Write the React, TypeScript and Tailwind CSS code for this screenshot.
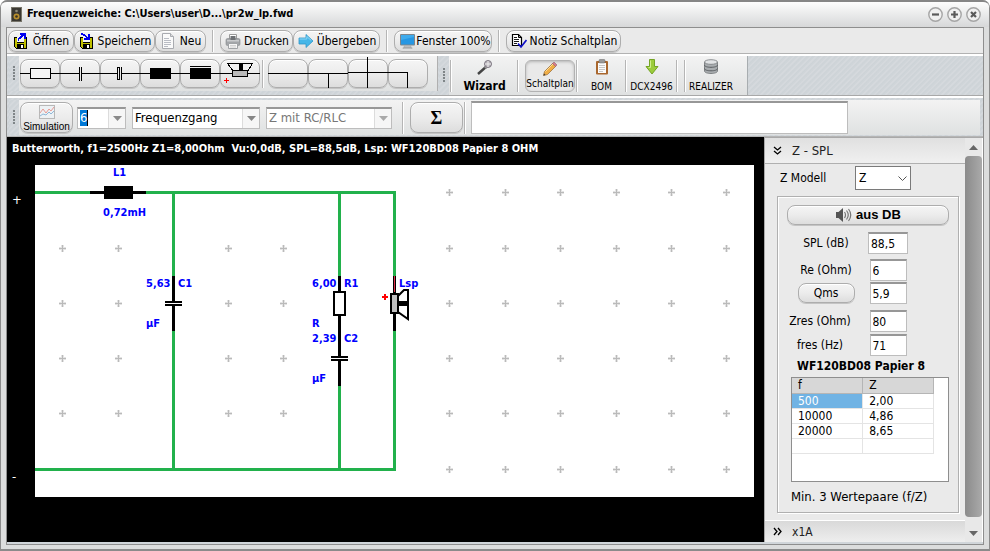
import type { ReactNode } from "react";

const tahoma = "font-['DejaVu_Sans_Condensed','DejaVu_Sans',sans-serif]";

const raised =
  "rounded-lg border border-[#adadad] bg-linear-to-b from-[#f5f5f5] via-[#ececec] to-[#dddddd] shadow-[inset_0_1px_0_#ffffff,0_1px_0_#c4c4c4]";
const texture =
  "bg-[#d0d5d9] bg-[repeating-linear-gradient(135deg,#d5d9dd_0px,#d5d9dd_1px,#cdd3d7_2px,#d1d6da_4px)]";
const band = "bg-linear-to-b from-[#f3f3f3] to-[#dfe1e1]";

function Sep({ className = "h-6" }: { className?: string }) {
  return <span className={`w-[2px] shrink-0 border-l border-[#b5b5b5] bg-white ${className}`} />;
}

function Grip() {
  return (
    <span className={`flex w-[10px] shrink-0 items-center justify-center self-stretch ${texture}`}>
      <svg width="3" height="16" viewBox="0 0 3 16" shapeRendering="crispEdges">
        {[0, 3, 6, 9, 12].map((y) => (
          <rect key={y} x="0" y={y} width="2" height="2" fill="#7f8588" />
        ))}
      </svg>
    </span>
  );
}

function ToolButton({ icon, label, className }: { icon: ReactNode; label: string; className: string }) {
  return (
    <button className={`flex h-[22px] items-center whitespace-nowrap pl-1 text-[12px] leading-5 ${raised} ${className}`}>
      {icon}
      <span className="flex-1 text-center">{label}</span>
    </button>
  );
}

function Floppy({ save }: { save?: boolean }) {
  return (
    <svg className="shrink-0" width="16" height="16" viewBox="0 0 16 16" shapeRendering="crispEdges">
      <path d="M1 4h13v12H3l-2-2z" fill="#000" />
      <path d="M2 5h2v10H3v-1H2zM11 5h2v10h-2z" fill="#c0c000" />
      <path d="M4 4h7v5H4z" fill="#f4f4f4" />
      <path d="M4 10h7v1H4z" fill="#c0c000" />
      <path d="M5 12h6v3H5z" fill="#000" />
      <path d="M8 12h2v3H8z" fill="#fff" />
      {save ? (
        <path d="M2 0h2v1h2v1h1v1h1v1h1V1h2v6H5V5h2V4H6V3H4V2H2z" fill="#0000f0" />
      ) : (
        <path d="M7 0h6v6h-2V3h-1v1H9v1H8v1H6v2H5V5h1V4h1V3h1V2H7z" fill="#0000f0" />
      )}
    </svg>
  );
}

const PageIcon = (
  <svg className="shrink-0" width="16" height="16" viewBox="0 0 16 16">
    <path d="M2.500.500h8l3 3v12h-11z" fill="#fafafa" stroke="#a9abb0" />
    <path d="M10.500.500v3h3" fill="#ddd" stroke="#a9abb0" />
    <path d="M4 5.500h5M4 7.500h7M4 9.500h7M4 11.500h7M4 13.500h4" stroke="#b9bcc4" />
  </svg>
);

const PrinterIcon = (
  <svg className="shrink-0" width="16" height="16" viewBox="0 0 16 16">
    <path d="M4.500 7V1.500h7V7" fill="#fff" stroke="#9a9a9a" />
    <rect x="1" y="5.500" width="14" height="7" rx="1.500" fill="#a3a6a9" stroke="#85888b" strokeWidth=".6" />
    <path d="M5.500 3h5v4h-5z" fill="#6f7275" />
    <path d="M2 7h12v1.500H2z" fill="#c9cbcd" />
    <path d="M3.500 10.500h9v5h-9z" fill="#f6f6f6" stroke="#a0a3a6" />
    <path d="M5 12.500h6M5 14h6" stroke="#c4c4c4" strokeWidth=".7" />
  </svg>
);

const ArrowRightIcon = (
  <svg className="shrink-0" width="16" height="16" viewBox="0 0 16 16">
    <path d="M1 5h7V1.500l7 6.500-7 6.500V11H1z" fill="#45b6e8" stroke="#2f96c8" strokeWidth=".8" />
    <path d="M1.500 6h7.300V3.500l4.500 4" fill="none" stroke="#8bd6f5" />
  </svg>
);

const MonitorIcon = (
  <svg className="shrink-0" width="17" height="16" viewBox="0 0 17 16">
    <path d="M5 13h7v1.500H5zM4 14.500h9V16H4z" fill="#c3c7ca" stroke="#999" strokeWidth=".4" />
    <rect x="1" y="1" width="15" height="11.500" rx="1" fill="#7d858b" />
    <rect x="2" y="2" width="13" height="9.500" fill="#2697e3" />
    <path d="M2 2h13v2L2 7z" fill="#3fabec" />
  </svg>
);

const NoteIcon = (
  <svg className="shrink-0" width="16" height="16" viewBox="0 0 16 16">
    <path d="M1.500 1.500h6l3 3v8h-9z" fill="#fff" stroke="#000" strokeWidth="1.2" />
    <path d="M7.500 1.500v3h3" fill="none" stroke="#000" />
    <path d="M3 4.500h3M3 6.500h5M3 8.500h5M3 10.500h3" stroke="#000" strokeWidth=".9" />
    <path d="M7 10.500l3 3.500 5.500-7" fill="none" stroke="#1010c8" strokeWidth="1.700" />
  </svg>
);

function Title() {
  return (
    <header className={`flex h-[27px] shrink-0 items-center rounded-t-md border-t-2 border-[#868686] bg-linear-to-b from-[#fdfdfd] to-[#d7d8d9] pl-[10px] pr-2 ${tahoma}`}>
      <svg width="12" height="15" viewBox="0 0 12 15">
        <rect x=".5" y=".5" width="10" height="14" fill="#3a3832" stroke="#77746a" />
        <circle cx="5.500" cy="4" r="1.300" fill="#8f8b7a" />
        <circle cx="5.500" cy="9.500" r="3" fill="#b98f2c" />
        <circle cx="5.500" cy="9.500" r="1.300" fill="#3a3220" />
      </svg>
      <h1 className="ml-1 flex-1 text-[11px] font-bold">Frequenzweiche: C:\Users\user\D...\pr2w_lp.fwd</h1>
      <div className="flex gap-1">
        {[
          ["Minimieren", "M4 7.500h7"],
          ["Maximieren", "M7.500 4v7M4 7.500h7"],
          ["Schließen", "M5 5l5 5M10 5l-5 5"],
        ].map(([name, d]) => (
          <button key={name} aria-label={name}>
            <svg width="15" height="15" viewBox="0 0 15 15">
              <circle cx="7.500" cy="7.500" r="6.700" fill="#f0f0f0" stroke="#a5a5a5" strokeWidth="1.400" />
              <path d={d} stroke="#5a5a5a" strokeWidth="2.200" />
            </svg>
          </button>
        ))}
      </div>
    </header>
  );
}

function MenuBar() {
  return (
    <nav className={`flex h-[26px] shrink-0 items-center border-b border-[#b2b2b2] bg-[#eaeaea] pl-px ${tahoma}`}>
      <ToolButton className="w-[66px]" icon={<Floppy />} label="Öffnen" />
      <ToolButton className="w-[81px]" icon={<Floppy save />} label="Speichern" />
      <ToolButton className="w-[51px]" icon={PageIcon} label="Neu" />
      <Sep className="mx-[6px] h-[22px]" />
      <ToolButton className="w-[73px]" icon={PrinterIcon} label="Drucken" />
      <ToolButton className="w-[87px]" icon={ArrowRightIcon} label="Übergeben" />
      <Sep className="mx-[6px] h-[22px]" />
      <ToolButton className="w-[98px]" icon={MonitorIcon} label="Fenster 100%" />
      <Sep className="mx-[6px] h-[22px]" />
      <ToolButton className="w-[115px]" icon={NoteIcon} label="Notiz Schaltplan" />
    </nav>
  );
}

const parts: [string, ReactNode][] = [
  ["Widerstand", <><path d="M0 14.500h10M31 14.500h9" /><rect x="10.500" y="9.500" width="20" height="10" fill="#f4f4f4" /></>],
  ["Kondensator", <path d="M0 14.500h19M21 14.500h19M19.500 8v14M21.500 8v14" />],
  ["Elko", <><path d="M0 14.500h17M22 14.500h18" /><path d="M17.500 8.500h2v12h-2zM21.500 8v13" /></>],
  ["Spule", <><path d="M0 14.500h40" /><rect x="10" y="9" width="21" height="11" fill="#000" stroke="none" /></>],
  ["Kernspule", <><path d="M0 14.500h40M10 7.500h21" /><rect x="10" y="9" width="21" height="11" fill="#000" stroke="none" /></>],
  ["Lautsprecher", <><path d="M0 14.500h40" /><path d="M7.500 4.500h25l-5 8h-14z" fill="#f2f2f2" /><path d="M19 5h3v7h-3z" fill="#000" /><rect x="12.500" y="11.500" width="15" height="6" fill="#bbb" /><path d="M4 21.500h5M6.500 19v5" stroke="#ff0000" /></>],
];

const wires: [string, string][] = [
  ["Leitung", "M0 14.500h40"],
  ["Abzweig", "M0 14.500h40M20.500 14v15"],
  ["Kreuzung", "M0 13.500h40M19.500-2v31"],
  ["Ecke", "M0 13.500h19.500v15"],
];

function PartButton({ name, children }: { name: string; children: ReactNode }) {
  return (
    <button aria-label={name} title={name} className={`h-[29px] w-10 shrink-0 ${raised}`}>
      <svg className="-ml-px -mt-px overflow-visible" width="40" height="29" viewBox="0 0 40 29" fill="none" stroke="#000" shapeRendering="crispEdges">
        {children}
      </svg>
    </button>
  );
}

function IconTool({ label, className, text = "text-[10px]", children }: { label: string; className: string; text?: string; children: ReactNode }) {
  return (
    <button className={`flex shrink-0 flex-col items-center justify-between whitespace-nowrap ${className}`}>
      {children}
      <span className={`leading-[13px] ${text}`}>{label}</span>
    </button>
  );
}

function PartsBar() {
  return (
    <div className={`flex h-[42px] shrink-0 border-b border-t-2 border-b-[#a8a8a8] border-t-white pl-[2px] ${texture}`}>
      <div className={`mb-1 flex items-center border-r border-[#b0b0b0] pr-[9px] ${band}`}>
        <Grip />
        <span className="w-px" />
        {parts.map(([name, art]) => (
          <PartButton key={name} name={name}>{art}</PartButton>
        ))}
        <Sep className="ml-[2px] mr-1 h-[28px]" />
        {wires.map(([name, d]) => (
          <PartButton key={name} name={name}><path d={d} /></PartButton>
        ))}
      </div>
      <div className={`ml-px flex items-center border-r border-[#a8adb0] pr-[11px] ${band} ${tahoma}`}>
        <Grip />
        <Sep className="ml-px h-8" />
        <IconTool label="Wizard" className="h-[34px] w-[65px]" text="text-[12px] font-bold">
          <svg width="18" height="17" viewBox="0 0 18 17">
            <path d="M2 15L11 7" stroke="#444" strokeWidth="2.500" />
            <path d="M9 9l3-3" stroke="#999" strokeWidth="3" />
            <circle cx="12" cy="5" r="3.500" fill="#b7b2b9" stroke="#807a84" />
            <path d="M12 2v6M9 5h6" stroke="#eee" />
          </svg>
        </IconTool>
        <Sep className="mr-[6px] h-8" />
        <IconTool label="Schaltplan" className="h-8 w-[50px] rounded-md border border-[#b2b2b2] bg-[#e9e9e9] pb-px shadow-[inset_0_1px_3px_#b5b5b5]">
          <svg width="16" height="16" viewBox="0 0 16 16">
            <path d="M1.500 14.500l1-4L11 2l3 3-8.500 8.500z" fill="#f0ad45" stroke="#9f7440" strokeWidth=".8" />
            <path d="M3.500 10.500L11.500 2.500" stroke="#ffe09a" />
            <path d="M10.500 2.500L12 1l3 3-1.500 1.500z" fill="#d87a8a" stroke="#8c6670" strokeWidth=".6" />
            <path d="M1.500 14.500l.5-2 1.500 1.500z" fill="#333" />
          </svg>
        </IconTool>
        <Sep className="ml-px h-8" />
        <IconTool label="BOM" className="h-[34px] w-[47px]">
          <svg width="14" height="16" viewBox="0 0 14 16">
            <rect x="1" y="2" width="12" height="13.500" rx="1" fill="#a9672e" />
            <path d="M3 4h8v10H3z" fill="#fbfbfb" />
            <path d="M4 6.500h6M4 8.500h6M4 10.500h6M4 12.500h4" stroke="#c6c6c6" />
            <rect x="4" y=".5" width="6" height="3.500" rx="1" fill="#999" stroke="#666" strokeWidth=".5" />
          </svg>
        </IconTool>
        <Sep className="h-8" />
        <IconTool label="DCX2496" className="h-[34px] w-[49px]">
          <svg width="14" height="16" viewBox="0 0 14 16">
            <path d="M4.500.500h5v7H13L7 15 1 7.500h3.500z" fill="#9ccc3c" stroke="#74a424" />
            <path d="M5.500 1.500v7H3.500" fill="none" stroke="#d0ee8c" />
          </svg>
        </IconTool>
        <Sep className="mr-[6px] h-8" />
        <Sep className="h-8" />
        <IconTool label="REALIZER" className="h-[34px] w-[50px]">
          <svg width="16" height="15" viewBox="0 0 16 15">
            <path d="M1.500 3v9c0 1.500 3 2.500 6.500 2.500s6.500-1 6.500-2.500V3" fill="#a9adb0" stroke="#6d7174" strokeWidth=".8" />
            <path d="M1.500 6c0 1.500 3 2.300 6.500 2.300s6.500-.8 6.500-2.300M1.500 9.500c0 1.500 3 2.300 6.500 2.300s6.500-.8 6.500-2.300" fill="none" stroke="#595d60" />
            <ellipse cx="8" cy="3" rx="6.500" ry="2.300" fill="#e2e4e6" stroke="#777b7e" strokeWidth=".8" />
          </svg>
        </IconTool>
      </div>
    </div>
  );
}

const sunken = "border border-[#bdbdbd] border-t-2 border-t-[#979797] bg-white";

function Triangle({ up, color = "#8a8a8a" }: { up?: boolean; color?: string }) {
  return (
    <svg width="9" height="5" viewBox="0 0 9 5">
      <path d={up ? "M0 5l4.500-5L9 5z" : "M0 0l4.500 5L9 0z"} fill={color} />
    </svg>
  );
}

function Combo({ label, value, disabled, className }: { label: string; value: string; disabled?: boolean; className: string }) {
  return (
    <div className={`relative h-[22px] shrink-0 ${sunken} ${className} ${disabled ? "text-[#777]" : "text-black"}`}>
      <select aria-label={label} disabled={disabled} defaultValue={value} className="block h-full w-full appearance-none bg-transparent pl-[2px] text-[13px] leading-[18px] opacity-100 outline-none">
        <option>{value}</option>
      </select>
      <span className="pointer-events-none absolute inset-y-0 right-0 flex w-[17px] items-center justify-center border-l border-[#dcdcdc] bg-[#f6f6f6]">
        <Triangle color={disabled ? "#aaa" : "#858585"} />
      </span>
    </div>
  );
}

function SimulationBar() {
  return (
    <div className={`flex h-[41px] shrink-0 border-b border-t-2 border-b-[#b5b5b5] border-t-white pb-px pl-[2px] pr-[3px] pt-[2px] ${texture}`}>
      <div className={`flex flex-1 items-center ${band}`}>
        <Grip />
        <button className={`ml-px flex h-[31px] w-[53px] shrink-0 flex-col items-center justify-between pt-[2px] ${raised}`}>
          <svg width="16" height="14" viewBox="0 0 16 14">
            <rect x=".5" y=".5" width="15" height="13" fill="#edf1f4" stroke="#b8b8b8" />
            <path d="M1 8l3-4 3 4 3-4 2 2 3-4" fill="none" stroke="#e79a94" />
            <path d="M1 11l3-2 3 1 3-3 2 2 3-3" fill="none" stroke="#8fb8d8" />
          </svg>
          <span className="font-['Liberation_Sans',sans-serif] text-[10px] leading-[11px]">Simulation</span>
        </button>
        <div className={`ml-1 flex items-center gap-[6px] ${tahoma}`}>
          <div className={`flex h-[22px] w-[49px] items-center ${sunken}`}>
            <input aria-label="Wert" defaultValue="6" className="sr-only" />
            <span aria-hidden="true" className="ml-[2px] border-r border-black bg-[#0078d7] text-[13px] leading-4 text-white">6</span>
            <span className="ml-auto flex h-full w-[17px] items-center justify-center border-l border-[#dcdcdc] bg-[#f6f6f6]">
              <Triangle />
            </span>
          </div>
          <Combo label="Darstellung" value="Frequenzgang" className="w-[128px]" />
          <Combo label="Impedanz" value="Z mit RC/RLC" disabled className="w-[126px]" />
        </div>
        <Sep className="ml-[10px] mr-[6px] h-8" />
        <button aria-label="Summe" className={`h-[31px] w-[53px] shrink-0 font-['Liberation_Serif',serif] text-[18px] font-bold leading-[28px] ${raised}`}>Σ</button>
        <Sep className="ml-px mr-[5px] h-8" />
        <input aria-label="Anzeige" className={`h-[33px] min-w-0 flex-1 ${sunken}`} />
        <span className="w-[132px] shrink-0" />
      </div>
    </div>
  );
}

const gridX = [27, 83, 193, 248, 304, 359, 414, 470, 525, 581, 636, 691];
const gridY = [27, 83, 138, 193, 248, 304];
const covered = (x: number, y: number) =>
  ((y === 27 || y === 304) && x < 400) || x === 304 || x === 359;

function Schematic() {
  return (
    <svg className="block" width="719" height="332" viewBox="0 0 719 332" role="img" aria-label="Schaltplan" shapeRendering="crispEdges">
      <g stroke="#bababa" strokeWidth="1">
        {gridX.flatMap((x) =>
          gridY.filter((y) => !covered(x, y)).map((y) => (
            <g key={`${x}-${y}`}>
              <path d={`M${x - 3} ${y + 0.5}h7M${x + 0.5} ${y - 3}v7`} stroke="#e4e4e4" strokeWidth="3" />
              <path d={`M${x - 3} ${y + 0.5}h7M${x + 0.5} ${y - 3}v7`} />
            </g>
          )),
        )}
      </g>
      <path d="M0 27.500H359.500V304.500H0M138.500 27V304M304.500 27V304" fill="none" stroke="#22b14c" strokeWidth="3" />
      <g fill="#000">
        <rect x="55" y="26" width="56" height="3" />
        <rect x="69" y="21" width="29" height="13" />
        <rect x="137" y="111" width="3" height="55" />
        <rect x="303" y="111" width="3" height="110" />
        <rect x="358" y="111" width="3" height="55" />
        <rect x="130" y="136" width="17" height="5" />
        <rect x="296" y="191" width="17" height="5" />
      </g>
      <path d="M130 138.500h17M296 193.500h17" stroke="#fff" />
      <rect x="299" y="127" width="11" height="23" fill="#fff" stroke="#000" strokeWidth="2" />
      <path d="M359.500 111v16" stroke="#e0304a" />
      <g shapeRendering="auto">
        <path d="M363 131l6-6h4v29l-10-7z" fill="#fff" stroke="#000" strokeWidth="2" />
      </g>
      <rect x="363" y="136" width="10" height="5" />
      <rect x="356" y="129" width="7" height="19" fill="#c0c0c0" stroke="#000" strokeWidth="2" />
      <path d="M347 132h6M350 129v6" stroke="red" strokeWidth="2" />
      <g className={`text-[11px] font-bold ${tahoma}`} fill="#0000ff">
        <text x="78" y="11">L1</text>
        <text x="68" y="51">0,72mH</text>
        <text x="111" y="122">5,63</text>
        <text x="143" y="122">C1</text>
        <text x="111" y="162">µF</text>
        <text x="277" y="122">6,00</text>
        <text x="309" y="122">R1</text>
        <text x="277" y="162">R</text>
        <text x="277" y="177">2,39</text>
        <text x="309" y="177">C2</text>
        <text x="277" y="217">µF</text>
        <text x="364" y="122">Lsp</text>
      </g>
    </svg>
  );
}

function Field({ label, value, labelClass = "", inputClass = "w-[37px]" }: { label: string; value: string; labelClass?: string; inputClass?: string }) {
  return (
    <label className="flex items-center text-[12px]">
      <span className={`w-[78px] text-center ${labelClass}`}>{label}</span>
      <span className="flex w-[46px] justify-center">
        <input defaultValue={value} className={`h-[22px] pl-[2px] outline-none ${sunken} ${inputClass}`} />
      </span>
    </label>
  );
}

const pairs = [
  ["500", "2,00"],
  ["10000", "4,86"],
  ["20000", "8,65"],
  ["", ""],
];

function Chevrons({ down }: { down?: boolean }) {
  return (
    <svg width="9" height="9" viewBox="0 0 9 9" fill="none" stroke="#000" strokeWidth="1.300">
      <path d={down ? "M1 1l3.500 3L8 1M1 5l3.500 3L8 5" : "M1 1l3 3.500L1 8M5 1l3 3.500L5 8"} />
    </svg>
  );
}

function SidePanel() {
  return (
    <aside className={`flex w-[219px] shrink-0 border-t border-l border-[#a9a9a9] bg-[#eaeaea] ${tahoma}`}>
      <div className="flex min-w-0 flex-1 flex-col">
        <button className="flex h-[26px] shrink-0 items-center gap-[10px] border-b border-[#b0b0b0] bg-linear-to-b from-[#e0e0e0] to-[#f0f0f0] pl-2 text-[13px] text-[#222]">
          <Chevrons down /> Z - SPL
        </button>
        <div className="flex-1 pb-[7px] pl-3 pr-[6px]">
          <label className="flex h-7 items-center text-[12px]">
            <span className="w-[78px] pl-[3px]">Z Modell</span>
            <span className="relative">
              <select defaultValue="Z" className="block h-6 w-14 appearance-none border border-[#7a7a7a] bg-white pl-[3px]">
                <option>Z</option>
              </select>
              <svg className="pointer-events-none absolute right-1 top-[10px]" width="9" height="6" viewBox="0 0 9 6">
                <path d="M.5.500l4 4 4-4" fill="none" stroke="#555" />
              </svg>
            </span>
          </label>
          <section className="mt-1 h-[317px] border border-[#b0b0b0] px-[9px] pt-2 shadow-[inset_1px_1px_0_#fff,1px_1px_0_#fff]">
            <button className={`flex h-5 w-full items-center justify-center gap-1 font-['Liberation_Sans',sans-serif] text-[13px] font-bold ${raised}`}>
              <svg width="17" height="16" viewBox="0 0 17 16">
                <path d="M1 5h2.500L8 1v14l-4.500-4H1z" fill="#555" />
                <path d="M9.500 5q2 3 0 6M11.500 3.500q3.500 4.500 0 9M13.500 2q4.500 6 0 12" fill="none" stroke="#777" strokeWidth="1.200" />
              </svg>
              aus DB
            </button>
            <div className="mt-[7px] flex flex-col">
              <Field label="SPL (dB)" value="88,5" inputClass="w-10" />
              <div className="mt-[5px] mb-px"><Field label="Re (Ohm)" value="6" /></div>
              <div className="flex items-center text-[12px]">
                <span className="flex w-[78px] justify-center">
                  <button className={`h-5 w-[57px] ${raised}`}>Qms</button>
                </span>
                <span className="flex w-[46px] justify-center">
                  <input aria-label="Qms" defaultValue="5,9" className={`h-[22px] w-[37px] pl-[2px] outline-none ${sunken}`} />
                </span>
              </div>
              <div className="mt-[6px] mb-[2px]"><Field label="Zres (Ohm)" value="80" labelClass="pr-3" /></div>
              <Field label="fres (Hz)" value="71" labelClass="pr-3" />
            </div>
            <h2 className="mb-px whitespace-nowrap pl-[10px] text-[12px] font-bold leading-5">WF120BD08 Papier 8</h2>
            <div className="ml-1 h-[105px] border border-[#8e8e8e] bg-white">
              <table className="w-[142px] table-fixed border-collapse text-[12px] leading-[14px]">
                <thead>
                  <tr className="bg-[#d7d7d7] text-left">
                    <th className="h-[15px] border-b border-r border-[#b5b5b5] pl-[6px] font-normal">f</th>
                    <th className="border-b border-r border-[#b5b5b5] pl-[6px] font-normal">Z</th>
                  </tr>
                </thead>
                <tbody>
                  {pairs.map(([f, z], i) => (
                    <tr key={i}>
                      <td className={`h-[15px] border-b border-r border-[#e4e4e4] pl-[6px] ${i === 0 ? "bg-[#70b3e4] text-white" : ""}`}>{f}</td>
                      <td className="border-b border-r border-[#e4e4e4] pl-[6px]">{z}</td>
                    </tr>
                  ))}
                </tbody>
              </table>
            </div>
            <p className="ml-1 mt-[6px] whitespace-nowrap text-[13px] leading-[18px]">Min. 3 Wertepaare (f/Z)</p>
          </section>
        </div>
        <button className="flex h-[22px] shrink-0 items-center gap-[10px] border-t border-white bg-linear-to-b from-[#d9d9d9] to-[#eeeeee] pl-2 text-[12px] text-[#222]">
          <Chevrons /> x1A
        </button>
      </div>
      <div className="flex w-[18px] shrink-0 flex-col items-center border-r border-white bg-[#e8e8e8]">
        <span className="flex h-[18px] items-center"><Triangle up color="#666" /></span>
        <span className="w-full flex-1 rounded-sm bg-linear-to-r from-[#8b8b8b] to-[#aaaaaa]" />
        <span className="flex h-[25px] items-center pt-2"><Triangle color="#666" /></span>
      </div>
    </aside>
  );
}

export default function App() {
  return (
    <div className="flex min-h-screen flex-col rounded-t-lg border-x border-b-2 border-[#8b8b8b] bg-[#dcdddd] text-black">
      <Title />
      <div className="mx-[5px] mb-[4px] flex flex-1 flex-col border border-[#8e8e8e] bg-white">
        <MenuBar />
        <PartsBar />
        <SimulationBar />
        <main className="flex flex-1 border-b-2 border-[#d0d5d9]">
          <div className={`flex min-w-0 flex-1 flex-col bg-black text-white ${tahoma}`}>
            <p className="h-7 truncate pl-[5px] text-[11px] font-bold leading-6 whitespace-pre">
              Butterworth, f1=2500Hz Z1=8,00Ohm  Vu:0,0dB, SPL=88,5dB, Lsp: WF120BD08 Papier 8 OHM
            </p>
            <div className="flex pr-[10px] text-[13px] leading-4">
              <div className="flex w-7 shrink-0 flex-col justify-between pb-3 pl-[5px] pt-[27px]">
                <span>+</span>
                <span>-</span>
              </div>
              <div className="min-w-0 flex-1 overflow-hidden bg-white">
                <Schematic />
              </div>
            </div>
          </div>
          <SidePanel />
        </main>
      </div>
    </div>
  );
}
